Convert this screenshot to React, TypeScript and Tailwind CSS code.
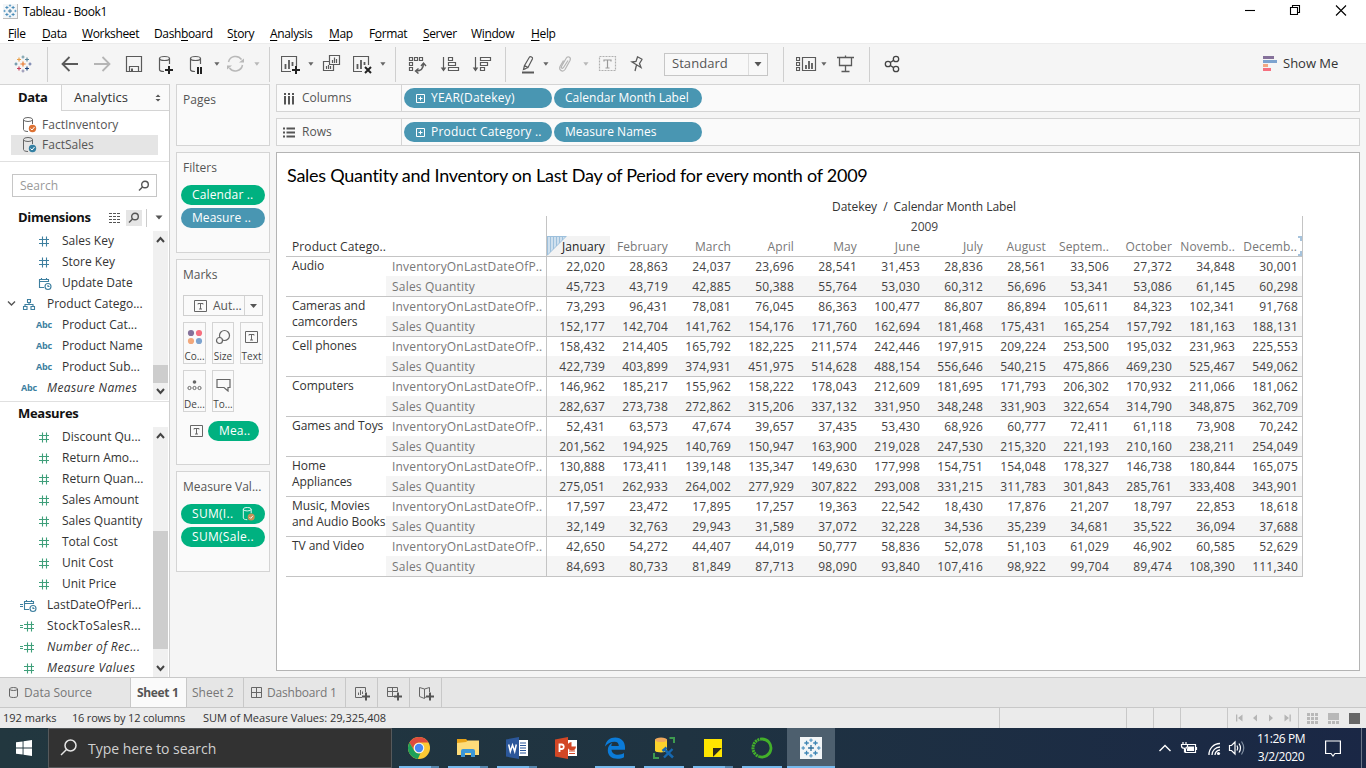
import React from "react";

type Kids = { children?: React.ReactNode };

/* ---------- shared icons ---------- */

function Ic({ x, w = 20, children }: Kids & { x: number; w?: number }) {
  return (
    <svg width={w} height={20} viewBox={`${x} 54 ${w} 20`} fill="none" stroke="#5a5a5a" strokeWidth={1.2} className="shrink-0">
      {children}
    </svg>
  );
}

function Caret({ color = "#666" }: { color?: string }) {
  return (
    <svg width={6} height={4} viewBox="0 0 6 4" className="shrink-0">
      <path d="M0.3 0.3H5.5L2.9 3.7Z" fill={color} />
    </svg>
  );
}

const Sep = () => <div className="h-[35px] w-px shrink-0 bg-[#cfcfcf]" />;

function TableauMark({ size, mono = false }: { size: number; mono?: boolean }) {
  const c = mono
    ? ["#2b6c99", "#3f86b5", "#3f86b5", "#3f86b5", "#3f86b5", "#5d9bc4", "#5d9bc4", "#5d9bc4", "#5d9bc4"]
    : ["#e8762b", "#e8a04a", "#5b879b", "#c8415a", "#1f457e", "#7099a6", "#59879b", "#8f8fb0", "#6a78a8"];
  const plus = (x: number, y: number, r: number, col: string, k: number) => (
    <path key={k} d={`M${x - r} ${y}H${x + r}M${x} ${y - r}V${y + r}`} stroke={col} strokeWidth={1.15} />
  );
  return (
    <svg width={size} height={size} viewBox="0 0 18 18" fill="none" className="shrink-0">
      {plus(9, 9, 2.6, c[0], 0)}
      {plus(5, 4.5, 2, c[1], 1)}
      {plus(13, 4.5, 2, c[2], 2)}
      {plus(5, 13.5, 2, c[3], 3)}
      {plus(13, 13.5, 2, c[4], 4)}
      {plus(9, 2, 1.5, c[5], 5)}
      {plus(2, 9, 1.5, c[6], 6)}
      {plus(9, 16, 1.5, c[7], 7)}
      {plus(16, 9, 1.5, c[8], 8)}
    </svg>
  );
}

/* ---------- title, menu ---------- */

function TitleBar() {
  return (
    <div className="flex h-[22px] items-center bg-white">
      <div className="ml-[3px] flex h-[15px] w-[15px] items-center justify-center border-r border-b border-[#bbb] bg-[#f3f6f8]">
        <TableauMark size={14} mono />
      </div>
      <span className="ml-[5px] pt-px font-['Open_Sans',sans-serif] text-[12px] tracking-[-0.4px] text-black">Tableau - Book1</span>
      <svg width={110} height={18} viewBox="1240 2 110 18" className="ml-auto mr-[16px]" fill="none" stroke="#000" strokeWidth={1.1}>
        <path d="M1245 10.500H1255" />
        <path d="M1290.500 7.500H1297.500V14.500H1290.500ZM1292.500 7.500V5.500H1299.500V12.500H1297.500" />
        <path d="M1336 5.500L1346 15.500M1346 5.500L1336 15.500" />
      </svg>
    </div>
  );
}

function MenuBar() {
  const U = ({ children }: Kids) => <span className="underline underline-offset-2">{children}</span>;
  return (
    <div className="flex h-[21px] items-center bg-white pl-[8px] pt-[2px] font-['Open_Sans',sans-serif] text-[12px] tracking-[-0.36px] whitespace-nowrap text-black">
      <span className="w-[34px]"><U>F</U>ile</span>
      <span className="w-[40px]"><U>D</U>ata</span>
      <span className="w-[72px]"><U>W</U>orksheet</span>
      <span className="w-[73px]">Dash<U>b</U>oard</span>
      <span className="w-[43px]">S<U>t</U>ory</span>
      <span className="w-[59px]"><U>A</U>nalysis</span>
      <span className="w-[40px]"><U>M</U>ap</span>
      <span className="w-[54px]">F<U>o</U>rmat</span>
      <span className="w-[48px]"><U>S</U>erver</span>
      <span className="w-[60px]">Wi<U>n</U>dow</span>
      <span><U>H</U>elp</span>
    </div>
  );
}

/* ---------- toolbar ---------- */

function Toolbar() {
  return (
    <div className="flex h-[41px] items-center border-t border-[#ececec] bg-[#f5f5f5] pl-[14px]">
      <TableauMark size={18} />
      <div className="w-[15px]" />
      <Sep />
      <div className="w-[12px]" />
      <Ic x={60}><path d="M62.500 64H78M69.500 57L62.500 64L69.500 71" stroke="#5a5a5a" strokeWidth={1.8} /></Ic>
      <div className="w-[12px]" />
      <Ic x={92}><path d="M94 64H109.500M102.500 57L109.500 64L102.500 71" stroke="#b5b5b5" strokeWidth={1.8} /></Ic>
      <div className="w-[12px]" />
      <Ic x={124}><path d="M126.500 56.500H141.500V71.500H126.500ZM129.500 71V66.500H138.500V71" /><path d="M131 68.500H133V71.500H131Z" fill="#5a5a5a" stroke="none" /></Ic>
      <div className="w-[13px]" />
      <Ic x={157}>
        <path d="M164 71.500C161 71.500 159.500 70.500 159.500 69.500V58.500M169.500 58.500V64" />
        <ellipse cx={164.500} cy={58.500} rx={5} ry={2} />
        <path d="M165 70H173M169 66V74" stroke="#222" strokeWidth={2} />
      </Ic>
      <div className="w-[10px]" />
      <Ic x={187}>
        <path d="M195 71.500C192 71.500 190.500 70.500 190.500 69.500V58.500M200.500 58.500V64" />
        <ellipse cx={195.500} cy={58.500} rx={5} ry={2} />
        <path d="M198 67V74M201 67V74" stroke="#222" strokeWidth={2} />
      </Ic>
      <div className="w-[7px]" />
      <Caret />
      <div className="w-[6px]" />
      <Ic x={226}>
        <g stroke="#b8b8b8" strokeWidth={1.5}><path d="M228.500 62A7.300 7.300 0 0 1 241.500 59.500M242.500 65A7.300 7.300 0 0 1 229.500 68" /></g>
        <path d="M239 62.500H244V58.500ZM232 65.500H227V69.500Z" fill="#b8b8b8" stroke="none" />
      </Ic>
      <div className="w-[8px]" />
      <Caret color="#b8b8b8" />
      <div className="w-[9px]" />
      <Sep />
      <div className="w-[11px]" />
      <Ic x={281}>
        <path d="M291 71.500H281.500V56.500H296.500V66" />
        <path d="M285.500 69V64M289 69V60M292.500 66V62" strokeWidth={1.8} />
        <path d="M292 70H300M296 66V74" stroke="#222" strokeWidth={2} />
      </Ic>
      <div className="w-[7px]" />
      <Caret />
      <div className="w-[8px]" />
      <Ic x={322}>
        <path d="M329.500 55.500H339.500V64.500H329.500ZM329 61.500H323.500V70.500H333.500V65" />
        <path d="M332.500 63V60M334.500 63V57.500M336.500 63V59M326.500 69V66M328.500 69V65M330.500 69V66" />
      </Ic>
      <div className="w-[11px]" />
      <Ic x={353}>
        <path d="M362 71.500H353.500V56.500H368.500V65" />
        <path d="M357.500 69V64M361 69V60M364.500 65V62" strokeWidth={1.8} />
        <path d="M365 67L371 73M371 67L365 73" stroke="#222" strokeWidth={2} />
      </Ic>
      <div className="w-[7px]" />
      <Caret />
      <div className="w-[9px]" />
      <Sep />
      <div className="w-[12px]" />
      <Ic x={408}>
        <path d="M409.500 57.500H412.500V60.500H409.500ZM414.500 57.500H417.500V60.500H414.500ZM419.500 57.500H422.500V60.500H419.500ZM409.500 62.500H412.500V65.500H409.500ZM409.500 67.500H412.500V70.500H409.500Z" />
        <path d="M416 71C421 71 423.500 68 423.500 63.500M421 66L423.500 63L426 66M418.500 68.500L415.500 71L418.500 73.500" strokeWidth={1.4} />
      </Ic>
      <div className="w-[12px]" />
      <Ic x={440}>
        <path d="M443.500 57V70M448.500 57.500H452.500V60.500H448.500ZM448.500 62.500H455.500V65.500H448.500ZM448.500 67.500H458.500V70.500H448.500Z" />
        <path d="M440.700 67.500H446.300L443.500 71.500Z" fill="#5a5a5a" stroke="none" />
      </Ic>
      <div className="w-[12px]" />
      <Ic x={472}>
        <path d="M475.500 57V70M480.500 57.500H490.500V60.500H480.500ZM480.500 62.500H487.500V65.500H480.500ZM480.500 67.500H484.500V70.500H480.500Z" />
        <path d="M472.700 67.500H478.300L475.500 71.500Z" fill="#5a5a5a" stroke="none" />
      </Ic>
      <div className="w-[13px]" />
      <Sep />
      <div className="w-[12px]" />
      <Ic x={518}>
        <path d="M524.500 65.500L529.500 57C530.500 56 533 57.300 532.500 58.700L528 67.500ZM524.500 65.500L523.500 69.500L528 67.500M523.500 69.500L525.500 69" />
        <path d="M522 72.500H534" strokeWidth={2} />
      </Ic>
      <div className="w-[5px]" />
      <Caret />
      <div className="w-[7px]" />
      <Ic x={556}>
        <path d="M568 60.500L563.500 67.500C562.500 69 560.800 68 561.500 66.500L566 58.500C567.500 55.500 571.500 57 570 60.500L565 69.500C563 72.500 558.500 70.500 560 66.500L563.500 60.500" stroke="#b5b5b5" />
      </Ic>
      <div className="w-[7px]" />
      <Caret color="#b8b8b8" />
      <div className="w-[9px]" />
      <Ic x={598}>
        <rect x={599.500} y={56.500} width={16} height={14} stroke="#b0b0b0" strokeDasharray="2 1" />
        <path d="M604 61.500V60H611V61.500M607.500 60V68M605.500 68H609.500" stroke="#999" />
      </Ic>
      <div className="w-[10px]" />
      <Ic x={628}>
        <path d="M637 56.500L642.500 59.500M637.500 57L636 61.500L632 62L641 67.500L639.500 63.500L642 59.500M636.500 65L635 71" strokeWidth={1.3} />
      </Ic>
      <div className="w-[16px]" />
      <div className="flex h-[23px] w-[104px] items-center border border-[#c6c6c6] bg-[#f8f8f8]">
        <span className="flex-1 pl-[7px] font-['Open_Sans',sans-serif] text-[13px] tracking-[0.05px] text-[#555]">Standard</span>
        <div className="flex h-full w-[19px] items-center justify-center border-l border-[#ddd]">
          <svg width={8} height={5}><path d="M0.500 0H7.500L4 4.500Z" fill="#555" /></svg>
        </div>
      </div>
      <div className="w-[15px]" />
      <Sep />
      <div className="w-[12px]" />
      <Ic x={796} w={21}>
        <path d="M796.500 57.500H799.500V60.500H796.500ZM796.500 62.500H799.500V65.500H796.500ZM796.500 67.500H799.500V70.500H796.500ZM802.500 57.500H815.500V70.500H802.500Z" />
        <path d="M806 69V65M809 69V61M812 69V63" strokeWidth={1.8} />
      </Ic>
      <div className="w-[4px]" />
      <Caret />
      <div className="w-[9px]" />
      <Ic x={836}>
        <path d="M837 57.500H854M839.500 58V65.500H851.500V58M845.500 66V71.500M841.500 71.500H849.500M845.500 55.500V57" strokeWidth={1.3} />
      </Ic>
      <div className="w-[13px]" />
      <Sep />
      <div className="w-[12px]" />
      <Ic x={882}>
        <g stroke="#444" strokeWidth={1.3}>
          <circle cx={888} cy={64} r={2.700} /><circle cx={896} cy={59} r={2.700} /><circle cx={896} cy={69} r={2.700} />
          <path d="M890.300 62.500L893.600 60.400M890.300 65.500L893.600 67.600" />
        </g>
      </Ic>
      <svg width={15} height={16} className="ml-auto" shapeRendering="crispEdges">
        <path d="M0 0H11V3H0Z" fill="#85719a" /><path d="M0 4H14V7H0Z" fill="#7da3cf" />
        <path d="M0 8H5V11H0Z" fill="#f2a882" /><path d="M0 12H8V15H0Z" fill="#f6707f" />
      </svg>
      <span className="ml-[5px] w-[83px] font-['Open_Sans',sans-serif] text-[13px] text-[#333]">Show Me</span>
    </div>
  );
}

/* ---------- data pane ---------- */

const BLUE = "#3d7f9f";
const GREEN = "#3f9f7a";

function DbIcon({ badge }: { badge: string }) {
  return (
    <svg width={14} height={16} viewBox="0 0 14 16" fill="none" stroke="#666">
      <ellipse cx={5} cy={2.500} rx={4.500} ry={2} /><path d="M0.500 2.500V12.500C0.500 13.500 2 14.500 5 14.500M9.500 2.500V7" />
      <circle cx={9.500} cy={11.500} r={3.700} fill={badge} stroke="none" /><path d="M7.500 11.500L9 13L11.500 10" stroke="#fff" />
    </svg>
  );
}

function FieldIcon({ kind }: { kind: string }) {
  if (kind === "abc")
    return <span className="w-[20px] text-center font-['Open_Sans',sans-serif] text-[9px] font-bold tracking-[-0.1px] text-[#3d7f9f]">Abc</span>;
  return (
    <svg width={20} height={20} viewBox="0 0 20 20" fill="none" strokeWidth={1.1} className="shrink-0" stroke={kind.includes("num") && kind !== "num-b" ? GREEN : BLUE}>
      {kind.includes("num") && <path d="M5 8.500H15M5 12.500H15M8.500 5.500V15.500M12.500 5.500V15.500" />}
      {kind === "eq-num" && <path d="M1 9.500H4M1 11.500H4" />}
      {kind.includes("cal") && (
        <g>
          <path d="M10 14.500H5.500V6.500H14.500V9M5.500 8.500H14.500M7.500 5V7M12.500 5V7" />
          <circle cx={14} cy={13.500} r={3} /><path d="M14 12V13.500H15.500" />
        </g>
      )}
      {kind === "eq-cal" && <path d="M1 9.500H4M1 11.500H4" />}
      {kind === "hier" && <path d="M8.500 5.500H11.500V8.500H8.500ZM4.500 12.500H8V15.500H4.500ZM12 12.500H15.500V15.500H12ZM10 8.500V10.500M6 12.500V10.500H14V12.500" />}
    </svg>
  );
}

function Field({ kind, name, top = false, italic = false }: { kind: string; name: string; top?: boolean; italic?: boolean }) {
  return (
    <div className="flex h-[21px] shrink-0 items-center">
      {top ? (
        <div className="flex w-[19px] shrink-0 justify-center pl-[4px]">
          {kind === "hier" && <svg width={9} height={7} fill="none" stroke="#555" strokeWidth={1.4}><path d="M1 1.500L4.500 5L8 1.500" /></svg>}
        </div>
      ) : (
        <div className="w-[34px] shrink-0" />
      )}
      <FieldIcon kind={kind} />
      <span className={`ml-[8px] whitespace-nowrap ${italic ? "tracking-[0.36px] italic" : ""} ${kind === "eq-num" ? "tracking-[0.28px]" : ""}`}>{name}</span>
    </div>
  );
}

const Glass = () => (
  <svg width={12} height={12} fill="none" stroke="#555" strokeWidth={1.4}>
    <circle cx={7} cy={4.500} r={3.300} /><path d="M4.500 7L1 10.500" />
  </svg>
);

function DataPane() {
  return (
    <div className="flex w-[170px] shrink-0 flex-col overflow-hidden border-r border-[#cfcfcf] bg-white font-['Open_Sans',sans-serif]">
      <div className="flex h-[27px] shrink-0">
        <div className="flex w-[61px] items-center border-t border-[#d4d4d4] pl-[18px] text-[13px] font-bold tracking-[-0.4px] text-[#111]">Data</div>
        <div className="flex flex-1 items-center border border-r-0 border-[#d4d4d4] bg-[#fafafa] pl-[12px] text-[13px] tracking-[0.05px] text-[#333]">
          Analytics
          <svg width={6} height={8} className="ml-auto mr-[8px]"><path d="M0.500 3L3 0.500L5.500 3ZM0.500 5L3 7.500L5.500 5Z" fill="#555" /></svg>
        </div>
      </div>
      <div className="flex h-[51px] shrink-0 flex-col border-b border-[#e0e0e0] pt-[4px] pl-[11px] text-[12px] tracking-[0.02px] text-[#555]">
        <div className="flex h-[20px] items-center pl-[12px]"><DbIcon badge="#dd7234" /><span className="ml-[5px]">FactInventory</span></div>
        <div className="flex h-[20px] w-[147px] items-center bg-[#e5e5e5] pl-[12px]"><DbIcon badge="#3480a3" /><span className="ml-[5px]">FactSales</span></div>
      </div>
      <div className="mt-[12px] ml-[12px] flex h-[23px] w-[145px] shrink-0 items-center justify-between border border-[#c6c6c6] pr-[6px] pl-[7px] text-[12px] text-[#999]">
        Search <Glass />
      </div>
      <div className="flex h-[34px] shrink-0 items-center pt-[7px] pl-[18px] text-[13px] font-bold tracking-[-0.35px] text-[#111]">
        <span className="w-[91px]">Dimensions</span>
        <svg width={12} height={10} stroke="#555"><path d="M0 0.500H12M0 3.500H12M0 6.500H12M0 9.500H12" strokeDasharray="3 1" /></svg>
        <div className="ml-[5px] flex h-[16px] w-[16px] items-center justify-center bg-[#e5e5e5]"><Glass /></div>
        <div className="ml-[4px] h-[18px] w-px bg-[#ccc]" />
        <svg width={8} height={5} className="ml-[8px]"><path d="M0.500 0.500H7.500L4 4.500Z" fill="#555" /></svg>
      </div>
      <div className="flex h-[171px] shrink-0 border-b border-[#e0e0e0] pb-px text-[12px] text-[#333]">
        <div className="-mt-px flex flex-1 flex-col overflow-hidden">
          <Field kind="num-b" name="Sales Key" />
          <Field kind="num-b" name="Store Key" />
          <Field kind="cal" name="Update Date" />
          <Field kind="hier" name="Product Catego..." top />
          <Field kind="abc" name="Product Cat..." />
          <Field kind="abc" name="Product Name" />
          <Field kind="abc" name="Product Sub..." />
          <Field kind="abc" name="Measure Names" top italic />
        </div>
        <div className="flex w-[15px] shrink-0 flex-col items-center bg-[#f0f0f0]">
          <svg width={15} height={17} fill="none" stroke="#444" strokeWidth={2}><path d="M4 11L7.500 7L11 11" /></svg>
          <div className="mt-auto h-[18px] w-[15px] bg-[#cdcdcd]" />
          <svg width={15} height={17} fill="none" stroke="#444" strokeWidth={2}><path d="M4 6L7.500 10L11 6" /></svg>
        </div>
        <div className="w-px" />
      </div>
      <div className="flex h-[25px] shrink-0 items-center pb-[2px] pl-[18px] text-[13px] font-bold tracking-[-0.3px] text-[#111]">Measures</div>
      <div className="flex min-h-0 flex-1 text-[12px] text-[#333]">
        <div className="-mt-px flex flex-1 flex-col overflow-hidden">
          <Field kind="num" name="Discount Qu..." />
          <Field kind="num" name="Return Amo..." />
          <Field kind="num" name="Return Quan..." />
          <Field kind="num" name="Sales Amount" />
          <Field kind="num" name="Sales Quantity" />
          <Field kind="num" name="Total Cost" />
          <Field kind="num" name="Unit Cost" />
          <Field kind="num" name="Unit Price" />
          <Field kind="eq-cal" name="LastDateOfPeri..." top />
          <Field kind="eq-num" name="StockToSalesR..." top />
          <Field kind="eq-num" name="Number of Rec..." top italic />
          <Field kind="num" name="Measure Values" top italic />
        </div>
        <div className="flex w-[15px] flex-col bg-[#f0f0f0]">
          <svg width={15} height={17} fill="none" stroke="#444" strokeWidth={2} className="shrink-0"><path d="M4 11L7.500 7L11 11" /></svg>
          <div className="mt-[87px] h-[118px] shrink-0 bg-[#cdcdcd]" />
          <svg width={15} height={17} className="mt-auto shrink-0" fill="none" stroke="#444" strokeWidth={2}><path d="M4 6L7.500 10L11 6" /></svg>
        </div>
        <div className="w-px" />
      </div>
    </div>
  );
}

/* ---------- cards ---------- */

function Card({ title, className, children }: Kids & { title: string; className: string }) {
  return (
    <div className={`flex shrink-0 flex-col border border-[#d4d4d4] bg-[#fafafa] ${className}`}>
      <div className="flex h-[30px] shrink-0 items-center pl-[6px] text-[12px] text-[#555]">{title}</div>
      {children}
    </div>
  );
}

const Pill = ({ className, children }: Kids & { className: string }) => (
  <div className={`flex h-[20px] shrink-0 items-center rounded-full text-[12px] font-medium whitespace-nowrap text-white ${className}`}>{children}</div>
);

const TBox = () => (
  <svg width={13} height={12} viewBox="0 0 13 12" fill="none" stroke="#666">
    <path d="M0.500 0.500H12.500V11.500H0.500ZM4 4.500V3.500H9V4.500M6.500 3.500V9M5 9H8" />
  </svg>
);

function MarkButton({ label, className, children }: Kids & { label: string; className: string }) {
  return (
    <div className={`flex h-[42px] flex-col items-center border border-[#d4d4d4] bg-[#fafafa] ${className}`}>
      <div className="flex h-[28px] items-center justify-center">{children}</div>
      <span className="text-[10px] leading-[10px] whitespace-nowrap text-[#444]">{label}</span>
    </div>
  );
}

function Cards() {
  return (
    <div className="ml-[6px] flex w-[94px] shrink-0 flex-col gap-[6px] font-['Open_Sans',sans-serif]">
      <Card title="Pages" className="h-[62px]" />
      <Card title="Filters" className="h-[101px]">
        <Pill className="mt-[2px] ml-[4px] w-[84px] bg-[#00b180] pl-[11px] tracking-[0.15px]">Calendar ..</Pill>
        <Pill className="mt-[3px] ml-[4px] w-[84px] bg-[#4996b2] pl-[11px] tracking-[0.05px]">Measure ..</Pill>
      </Card>
      <Card title="Marks" className="h-[206px]">
        <div className="mt-[5px] ml-[6px] flex h-[21px] w-[80px] items-center border border-[#cfcfcf] pl-[10px] text-[12px] text-[#555]">
          <TBox />
          <span className="ml-[6px]">Aut...</span>
          <div className="ml-auto flex h-full w-[18px] items-center justify-center border-l border-[#d4d4d4]">
            <svg width={7} height={4}><path d="M0 0H7L3.500 4Z" fill="#555" /></svg>
          </div>
        </div>
        <div className="mt-[6px] ml-[6px] grid grid-cols-[23px_22px_23px] gap-x-[6px] gap-y-[6px]">
          <MarkButton label="Co..." className="w-[23px]">
            <svg width={16} height={16}><circle cx={4} cy={4} r={3.100} fill="#85719a" /><circle cx={12} cy={4} r={3.100} fill="#f6707f" /><circle cx={4} cy={12} r={3.100} fill="#f2a87c" /><circle cx={12} cy={12} r={3.100} fill="#7da3cf" /></svg>
          </MarkButton>
          <MarkButton label="Size" className="w-[22px]">
            <svg width={16} height={16} fill="none" stroke="#666" strokeWidth={1.200}><circle cx={9.500} cy={6.500} r={5} /><circle cx={4.500} cy={11.500} r={3} fill="#fafafa" /></svg>
          </MarkButton>
          <MarkButton label="Text" className="w-[23px]"><TBox /></MarkButton>
          <MarkButton label="De..." className="w-[23px]">
            <svg width={15} height={12} fill="none" stroke="#666"><circle cx={7.500} cy={3} r={1.800} fill="#666" stroke="none" /><circle cx={2.500} cy={9} r={1.600} /><circle cx={7.500} cy={9} r={1.600} /><circle cx={12.500} cy={9} r={1.600} /></svg>
          </MarkButton>
          <MarkButton label="To..." className="w-[22px]">
            <svg width={15} height={14} fill="none" stroke="#666" strokeWidth={1.200}><path d="M1 1.500H14V9.500H12V13L8 9.500H1Z" /></svg>
          </MarkButton>
        </div>
        <div className="mt-[9px] flex items-center pl-[13px]">
          <TBox />
          <Pill className="ml-[5px] w-[51px] bg-[#00b180] pl-[11px] tracking-[0.15px]">Mea..</Pill>
        </div>
      </Card>
      <Card title="Measure Val..." className="h-[101px]">
        <Pill className="mt-[2px] ml-[4px] w-[84px] bg-[#00b180] pl-[11px] tracking-[0.3px]">
          SUM(I..
          <svg width={14} height={14} viewBox="0 0 14 16" className="ml-auto mr-[9px]" fill="none" stroke="#fff">
            <ellipse cx={5} cy={2.500} rx={4.500} ry={2} /><path d="M0.500 2.500V12.500C0.500 13.500 2 14.500 5 14.500M9.500 2.500V7" />
            <circle cx={9.500} cy={11.500} r={4} fill="#c69256" stroke="none" /><path d="M7.500 11.500L9 13L11.500 10" />
          </svg>
        </Pill>
        <Pill className="mt-[3px] ml-[4px] w-[84px] bg-[#00b180] pl-[11px] tracking-[0.3px]">SUM(Sale..</Pill>
      </Card>
    </div>
  );
}

/* ---------- shelves ---------- */

const PlusBox = () => (
  <svg width={9} height={9} className="mr-[6px]" fill="none" stroke="#fff"><path d="M0.500 0.500H8.500V8.500H0.500ZM2.500 4.500H6.500M4.500 2.500V6.500" /></svg>
);

function Shelf({ label, icon, a, b }: { label: string; icon: React.ReactNode; a: string; b: string }) {
  return (
    <div className="flex h-[28px] shrink-0 border border-[#d4d4d4] bg-[#fafafa]">
      <div className="flex w-[125px] items-center border-r border-[#d4d4d4] pl-[6px] text-[12px] tracking-[0.02px] text-[#555]">
        {icon}
        <span className="ml-[7px]">{label}</span>
      </div>
      <div className="flex items-center gap-[2px] pl-[2px]">
        <Pill className="w-[148px] bg-[#4996b2] pl-[12px] tracking-[0.22px]"><PlusBox />{a}</Pill>
        <Pill className="w-[148px] bg-[#4996b2] pl-[11px] tracking-[0.01px]">{b}</Pill>
      </div>
    </div>
  );
}

/* ---------- table ---------- */

const MONTHS = ["January", "February", "March", "April", "May", "June", "July", "August", "Septem..", "October", "Novemb..", "Decemb.."];

const ROWS: [string, string, string][] = [
  ["Audio", "22,020 28,863 24,037 23,696 28,541 31,453 28,836 28,561 33,506 27,372 34,848 30,001", "45,723 43,719 42,885 50,388 55,764 53,030 60,312 56,696 53,341 53,086 61,145 60,298"],
  ["Cameras and\ncamcorders", "73,293 96,431 78,081 76,045 86,363 100,477 86,807 86,894 105,611 84,323 102,341 91,768", "152,177 142,704 141,762 154,176 171,760 162,694 181,468 175,431 165,254 157,792 181,163 188,131"],
  ["Cell phones", "158,432 214,405 165,792 182,225 211,574 242,446 197,915 209,224 253,500 195,032 231,963 225,553", "422,739 403,899 374,931 451,975 514,628 488,154 556,646 540,215 475,866 469,230 525,467 549,062"],
  ["Computers", "146,962 185,217 155,962 158,222 178,043 212,609 181,695 171,793 206,302 170,932 211,066 181,062", "282,637 273,738 272,862 315,206 337,132 331,950 348,248 331,903 322,654 314,790 348,875 362,709"],
  ["Games and Toys", "52,431 63,573 47,674 39,657 37,435 53,430 68,926 60,777 72,411 61,118 73,908 70,242", "201,562 194,925 140,769 150,947 163,900 219,028 247,530 215,320 221,193 210,160 238,211 254,049"],
  ["Home\nAppliances", "130,888 173,411 139,148 135,347 149,630 177,998 154,751 154,048 178,327 146,738 180,844 165,075", "275,051 262,933 264,002 277,929 307,822 293,008 331,215 311,783 301,843 285,761 333,408 343,901"],
  ["Music, Movies\nand Audio Books", "17,597 23,472 17,895 17,257 19,363 22,542 18,430 17,876 21,207 18,797 22,853 18,618", "32,149 32,763 29,943 31,589 37,072 32,228 34,536 35,239 34,681 35,522 36,094 37,688"],
  ["TV and Video", "42,650 54,272 44,407 44,019 50,777 58,836 52,078 51,103 61,029 46,902 60,585 52,629", "84,693 80,733 81,849 87,713 98,090 93,840 107,416 98,922 99,704 89,474 108,390 111,340"],
];

function Cells({ data }: { data: string }) {
  return (
    <div className="grid h-full grid-cols-[63px_63px_63px_63px_63px_63px_63px_63px_63px_63px_63px_62px] items-center border-l border-[#c4c4c4] text-right tracking-[0.22px] text-[#444]">
      {data.split(" ").map((v, i) => <span key={i} className="pt-px pr-[5px] last:pr-[4px]">{v}</span>)}
    </div>
  );
}

function Viz() {
  return (
    <div className="flex h-[519px] shrink-0 flex-col border border-[#b4b4b4] bg-white pl-[9px] font-['Open_Sans',sans-serif] text-[12px]">
      <div className="flex h-[44px] items-center pl-[1px] font-['Lato',sans-serif] text-[18px] tracking-[-0.25px] text-black">
        Sales Quantity and Inventory on Last Day of Period for every month of 2009
      </div>
      <div className="flex h-[19px] items-center">
        <div className="w-[260px]" />
        <div className="w-[756px] pt-px text-center tracking-[-0.06px] text-[#333]">Datekey&nbsp; /&nbsp; Calendar Month Label</div>
      </div>
      <div className="flex w-[1017px] border-r border-[#c4c4c4]">
        <div className="flex w-[260px] shrink-0 flex-col justify-end border-b border-[#c4c4c4] pl-[6px]">
          <span className="h-[20px] leading-[22px] tracking-[0.1px] text-[#333]">Product Catego..</span>
        </div>
        <div className="flex-1 border-b border-l border-[#c4c4c4]">
          <div className="h-[20px] text-center leading-[22px] text-[#444]">2009</div>
          <div className="relative grid h-[20px] grid-cols-[63px_63px_63px_63px_63px_63px_63px_63px_63px_63px_63px_62px] text-right tracking-[0.12px] text-[#777]">
            {MONTHS.map((m, i) => (
              <span key={m} className={i === 0 ? "h-[20px] bg-[#f3f3f3] pr-[5px] leading-[22px] text-[#222]" : "h-[20px] pr-[5px] leading-[22px]"}>{m}</span>
            ))}
            <svg width={20} height={20} className="absolute top-0 left-0">
              <path d="M0 0H19.500L0 19.500Z" fill="#cfe0ee" />
              <path d="M0.500 0V19M3.500 0V16M6.500 0V13M9.500 0V10M12.500 0V7M15.500 0V4M0 0.500H19" stroke="#9dc0dc" />
              <path d="M0 19.500L19.500 0" stroke="#9dc0dc" />
            </svg>
            <svg width={4} height={20} className="absolute top-0 right-0"><path d="M0 0H4V5H2V2H0ZM0 20H4V15H2V18H0Z" fill="#a6c3dc" /></svg>
          </div>
        </div>
      </div>
      {ROWS.map(([name, inv, sales]) => (
        <div key={name} className="flex h-[40px] w-[1017px] border-r border-b border-[#c4c4c4]">
          <div className="w-[100px] shrink-0 pt-px pl-[6px] leading-[16px] tracking-[-0.06px] whitespace-pre text-[#333]">{name}</div>
          <div className="w-[916px] shrink-0">
            <div className="flex h-[19px] items-center">
              <div className="w-[160px] shrink-0 pt-px pl-[6px] tracking-[0.18px] text-[#777]">InventoryOnLastDateOfP..</div>
              <Cells data={inv} />
            </div>
            <div className="flex h-[20px] items-center bg-[#f5f5f5]">
              <div className="w-[160px] shrink-0 pt-px pl-[6px] tracking-[0.2px] text-[#777]">Sales Quantity</div>
              <Cells data={sales} />
            </div>
          </div>
        </div>
      ))}
    </div>
  );
}

/* ---------- bottom tabs and status ---------- */

function SheetTabs() {
  const plus = <path d="M9 11.500H17M13 7.500V15.500" stroke="#555" strokeWidth={2} />;
  const cell = "flex w-[32px] items-center justify-center border-r border-[#c8c8c8]";
  return (
    <div className="flex h-[30px] shrink-0 border-t border-[#c8c8c8] bg-[#e6e6e6] font-['Open_Sans',sans-serif] text-[12px] whitespace-nowrap text-[#777]">
      <div className="flex w-[131px] items-center border-r border-[#c8c8c8] pl-[9px]">
        <svg width={10} height={11} fill="none" stroke="#666" className="mr-[5px]"><ellipse cx={4.500} cy={2} rx={4} ry={1.500} /><path d="M0.500 2V9C0.500 10 2 10.500 4.500 10.500S8.500 10 8.500 9V2" /></svg>
        Data Source
      </div>
      <div className="flex w-[56px] items-center border-r border-[#c8c8c8] bg-[#fafafa] pl-[6px] font-bold tracking-[-0.35px] text-[#555]">Sheet 1</div>
      <div className="flex w-[57px] items-center border-r border-[#c8c8c8] pl-[5px]">Sheet 2</div>
      <div className="flex w-[102px] items-center border-r border-[#c8c8c8] pl-[7px] tracking-[-0.2px]">
        <svg width={11} height={11} fill="none" stroke="#666" className="mr-[5px]"><path d="M0.500 0.500H10.500V10.500H0.500ZM5.500 0.500V10.500M0.500 5.500H10.500" /></svg>
        Dashboard 1
      </div>
      <div className={cell}><svg width={18} height={16} fill="none" stroke="#666"><path d="M9 12.500H2.500V2.500H12.500V7M5.500 10V7.500M7.500 10V5M9.500 9V6.500" />{plus}</svg></div>
      <div className={cell}><svg width={18} height={16} fill="none" stroke="#666"><path d="M9 11.500H2.500V2.500H12.500V7M7.500 2.500V11.500M2.500 6.500H12.500" />{plus}</svg></div>
      <div className={cell}><svg width={18} height={16} fill="none" stroke="#666"><path d="M9 11.500L7.500 13.500L2.500 11.500V2.500L7.500 4L12.500 2.500V7M7.500 4V13" />{plus}</svg></div>
    </div>
  );
}

function StatusBar() {
  const line = "h-full border-l border-[#c8c8c8]";
  return (
    <div className="flex h-[21px] shrink-0 items-center border-t border-[#c8c8c8] bg-[#ebebeb] pl-[3px] font-['Open_Sans',sans-serif] text-[11px] whitespace-nowrap text-[#333]">
      <span className="w-[69px]">192 marks</span>
      <span className="w-[131px] tracking-[-0.2px]">16 rows by 12 columns</span>
      <span>SUM of Measure Values: 29,325,408</span>
      <div className={`ml-auto w-[127px] ${line}`} />
      <div className={`w-[27px] ${line}`} />
      <div className={`w-[27px] ${line}`} />
      <div className={`w-[47px] ${line}`} />
      <div className={`flex w-[71px] items-center pl-[8px] ${line}`}>
        <svg width={56} height={8} fill="#b5b5b5"><path d="M0 0.500H1.300V7.500H0ZM6.500 0.500V7.500L2 4ZM21 0.500V7.500L17 4ZM33 0.500V7.500L37 4ZM48.500 0.500V7.500L53 4ZM53.500 0.500H54.800V7.500H53.500Z" /></svg>
      </div>
      <div className={`flex w-[68px] items-center pl-[8px] ${line}`}>
        <svg width={54} height={11} fill="#b8b8b8">
          <path d="M0 0H3V3H0ZM4 0H7V3H4ZM8 0H11V3H8ZM0 4H3V7H0ZM4 4H7V7H4ZM8 4H11V7H8ZM0 8H3V11H0ZM4 8H7V11H4ZM8 8H11V11H8ZM21 0H32V7H21ZM21 8H24V11H21ZM25 8H28V11H25ZM29 8H32V11H29Z" />
          <path d="M42 0H53V11H42Z" fill="#666" />
        </svg>
      </div>
    </div>
  );
}

/* ---------- taskbar ---------- */

function Tile({ children, bar, active = false }: Kids & { bar: string; active?: boolean }) {
  return (
    <div className={active ? "flex h-[40px] w-[48px] flex-col items-center bg-[#4d5f6e]" : "mr-px flex h-[40px] w-[48px] flex-col items-center"}>
      <div className="flex h-[38px] items-center pt-[2px]">{children}</div>
      {bar === "full" && <div className="h-[2px] w-[40px] bg-[#76b9ed]" />}
      {bar === "active" && <div className="h-[2px] w-[48px] bg-[#76b9ed]" />}
      {bar === "multi" && <div className="flex h-[2px] w-[40px]"><div className="flex-1 bg-[#76b9ed]" /><div className="w-[8px] bg-[#5686ad]" /></div>}
    </div>
  );
}

function Taskbar() {
  return (
    <div className="flex h-[40px] shrink-0 items-center bg-linear-to-r from-[#22373f] via-[#1f3341] to-[#1a2745] font-['Open_Sans',sans-serif] text-white">
      <svg width={16} height={16} className="ml-[16px] mr-[16px]" fill="#fff"><path d="M0 2.300L6.600 1.400V7.500H0ZM7.500 1.200L16 0V7.500H7.500ZM0 8.400H6.600V14.600L0 13.700ZM7.500 8.400H16V16L7.500 14.800Z" /></svg>
      <div className="flex h-[40px] w-[344px] items-center border border-[#56595b] bg-[#323232] pl-[11px]">
        <svg width={18} height={18} fill="none" stroke="#e5e5e5" strokeWidth={1.500}><circle cx={10.500} cy={6.500} r={5.500} /><path d="M6.500 10.500L1 16" /></svg>
        <span className="ml-[10px] text-[14px] tracking-[-0.03px] text-[#d0d0d0]">Type here to search</span>
      </div>
      <div className="ml-[3px] flex">
        <Tile bar="multi">
          <svg width={22} height={22} viewBox="0 0 22 22">
            <circle cx={11} cy={11} r={11} fill="#fcc934" />
            <path d="M1.470 5.500A11 11 0 0 1 20.530 5.500H11A5.500 5.500 0 0 0 6.200 13.700Z" fill="#dd4b3e" />
            <path d="M1.470 5.500L6.240 13.750A5.500 5.500 0 0 0 12.500 16.300L9.800 21.940A11 11 0 0 1 1.470 5.500Z" fill="#1ea05a" />
            <circle cx={11} cy={11} r={5.300} fill="#f5f5f5" /><circle cx={11} cy={11} r={4.200} fill="#4687f4" />
          </svg>
        </Tile>
        <Tile bar="multi">
          <svg width={22} height={20} viewBox="0 0 22 20">
            <path d="M0 1H9L11 3H22V17H0Z" fill="#e8a317" /><path d="M0 5L9 4L11 2.500H22V17H0Z" fill="#fddc7a" />
            <path d="M4 19V13Q4 11 6 11H16Q18 11 18 13V19H14V15H8V19Z" fill="#3b97d8" />
          </svg>
        </Tile>
        <Tile bar="multi">
          <svg width={22} height={22} viewBox="0 0 22 22">
            <path d="M12 3H22V19H12Z" fill="#fff" /><path d="M14 6H20M14 8.500H20M14 11H20M14 13.500H20M14 16H20" stroke="#2b579a" strokeWidth={1.200} />
            <path d="M0 2.500L13 0V22L0 19.500Z" fill="#2b579a" /><path d="M2.700 7.500L4.300 14.500L6.500 8L8.700 14.500L10.300 7.500" fill="none" stroke="#fff" strokeWidth={1.500} />
          </svg>
        </Tile>
        <Tile bar="none">
          <svg width={22} height={22} viewBox="0 0 22 22">
            <path d="M12 3H22V19H12Z" fill="#fff" /><path d="M14 14H20M14 16.500H20" stroke="#d24726" strokeWidth={1.200} /><path d="M16.500 5V9.500H21A4.200 4.200 0 1 1 16.500 5Z" fill="#d24726" />
            <path d="M0 2.500L13 0V22L0 19.500Z" fill="#d24726" /><path d="M4.500 15V7.500H7A2.300 2.300 0 0 1 7 12H4.500" fill="none" stroke="#fff" strokeWidth={1.800} />
          </svg>
        </Tile>
        <Tile bar="full">
          <svg width={22} height={22} viewBox="0 0 22 22">
            <path d="M1 9.500C2 3.500 6 0.500 11.200 0.500C17.500 0.500 21 5 21 10V12.700H7.500C7.800 16 10.500 17.700 14 17.700C16.500 17.700 18.500 17 20 16V20.200C18 21.300 16 21.700 13.300 21.700C7.500 21.700 3.800 18.500 3.800 13.200C3.800 10 5.500 7.300 8.500 5.800C7.700 6.800 7.400 7.800 7.300 9H14.800C14.800 6.300 13.300 4.800 10.500 4.800C6.800 4.800 3.500 6.800 1 9.500Z" fill="#0b7bd8" />
          </svg>
        </Tile>
        <Tile bar="full">
          <svg width={22} height={22} viewBox="0 0 22 22">
            <path d="M2 2.500V13.500C2 16 14 16 14 13.500V2.500Z" fill="#fcd22c" /><ellipse cx={8} cy={2.800} rx={6} ry={2.300} fill="#f0a95c" />
            <path d="M16.500 1H21V6M1 16V21H6" fill="none" stroke="#3e9b4f" strokeWidth={2} />
            <path d="M11 12L20 20.500" stroke="#1668b0" strokeWidth={2.600} /><path d="M19.500 12L11 20.500M9.500 14L13.500 10.500" stroke="#1668b0" strokeWidth={2.400} />
          </svg>
        </Tile>
        <Tile bar="multi">
          <svg width={18} height={18}><path d="M0 0H18V9L9 18H0Z" fill="#ffe500" /><path d="M9 9H18L9 18Z" fill="#2c2a1c" /><path d="M18 9V18H9Z" fill="#ffe500" /></svg>
        </Tile>
        <Tile bar="full">
          <svg width={22} height={22} fill="none"><path d="M11 2A9 9 0 1 1 8 19.500" stroke="#43b02a" strokeWidth={2.800} /><path d="M11 2A9 9 0 0 0 8 19.500" stroke="#43b02a" strokeWidth={3} strokeDasharray="2 0.700" /></svg>
        </Tile>
        <Tile bar="active" active>
          <div className="flex h-[22px] w-[22px] items-center justify-center bg-[#f2f5f7]"><TableauMark size={20} mono /></div>
        </Tile>
      </div>
      <svg width={88} height={18} viewBox="1158 739 88 18" className="ml-auto" fill="none" stroke="#fff" strokeWidth={1.200}>
        <path d="M1159.500 751L1165 745.500L1170.500 751" strokeWidth={1.400} />
        <path d="M1188 744.500H1195.500V752.500H1185.500V749M1196.500 747V750" /><path d="M1188 746.500H1194V751H1187V749Z" fill="#fff" stroke="none" />
        <path d="M1183 742V744.500M1186 742V744.500M1181.500 744.500H1187.500V746C1187.500 749 1181.500 749 1181.500 746ZM1184.500 748V752.500" />
        <path d="M1209 755A11 11 0 0 1 1220 743.500M1212 755A8 8 0 0 1 1220 747M1215 755A5 5 0 0 1 1220 750" strokeWidth={1.300} />
        <circle cx={1218.500} cy={753.500} r={1.600} fill="#fff" stroke="none" />
        <path d="M1229.500 745.500H1231.500L1235 742V754L1231.500 750.500H1229.500ZM1237 745.500Q1238.500 748 1237 750.500M1239 743.500Q1242 748 1239 752.500" /><path d="M1241.500 741.500Q1246 748 1241.500 754.500" stroke="#8290a2" />
      </svg>
      <div className="ml-[8px] flex w-[54px] flex-col items-center text-[12px] leading-[18px] tracking-[-0.45px] whitespace-nowrap">
        <span>11:26 PM</span>
        <span>3/2/2020</span>
      </div>
      <svg width={16} height={17} className="ml-[17px]" fill="none" stroke="#fff" strokeWidth={1.200}><path d="M0.600 1H15.400V13.500H10L8 16L6 13.500H0.600Z" /></svg>
      <div className="ml-[20px] mr-[4px] h-[40px] w-px bg-[#6b7587]" />
    </div>
  );
}

export default function App() {
  return (
    <div className="flex h-[768px] w-[1366px] flex-col overflow-hidden bg-[#f5f5f5]">
      <TitleBar />
      <MenuBar />
      <Toolbar />
      <div className="flex h-[593px] shrink-0">
        <DataPane />
        <Cards />
        <div className="ml-[6px] flex w-[1084px] flex-col gap-[6px] font-['Open_Sans',sans-serif]">
          <Shelf
            label="Columns"
            a="YEAR(Datekey)"
            b="Calendar Month Label"
            icon={<svg width={12} height={13} stroke="#555" strokeWidth={2}><path d="M2 1V3M6 1V3M10 1V3M2 4V12.500M6 4V12.500M10 4V12.500" /></svg>}
          />
          <Shelf
            label="Rows"
            a="Product Category .."
            b="Measure Names"
            icon={<svg width={12} height={11} stroke="#555" strokeWidth={1.800}><path d="M0 1.500H2M3.500 1.500H12M0 5.500H2M3.500 5.500H12M0 9.500H2M3.500 9.500H12" /></svg>}
          />
          <Viz />
        </div>
      </div>
      <SheetTabs />
      <StatusBar />
      <Taskbar />
    </div>
  );
}
